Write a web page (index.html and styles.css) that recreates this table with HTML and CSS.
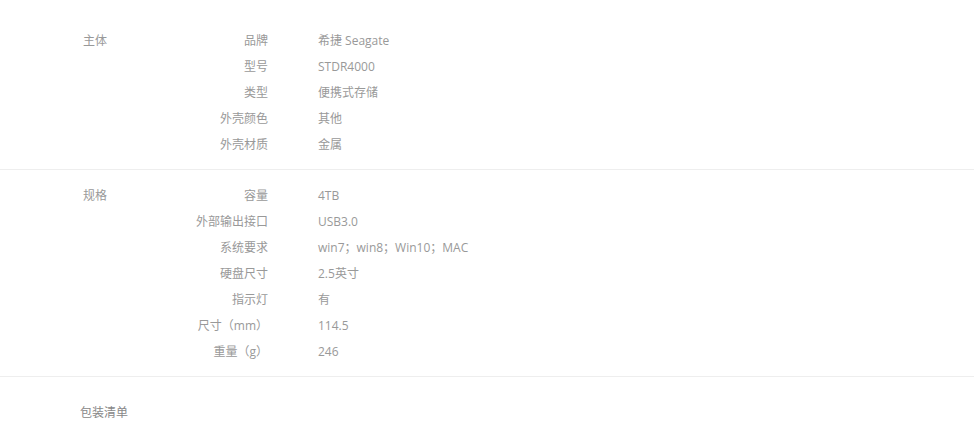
FILE: index.html
```html
<!DOCTYPE html>
<html lang="zh-CN">
<head>
    <meta charset="UTF-8">
    <meta name="viewport" content="width=device-width, initial-scale=1.0">
    <title>规格参数</title>
    <link rel="stylesheet" href="styles.css">
</head>
<body>
    <div class="spec-list">
        <div class="spec-group">
            <div class="group-title">主体</div>
            <dl class="group-items">
                <dt>品牌</dt><dd>希捷 Seagate</dd>
                <dt>型号</dt><dd>STDR4000</dd>
                <dt>类型</dt><dd>便携式存储</dd>
                <dt>外壳颜色</dt><dd>其他</dd>
                <dt>外壳材质</dt><dd>金属</dd>
            </dl>
        </div>
        <div class="spec-group">
            <div class="group-title">规格</div>
            <dl class="group-items">
                <dt>容量</dt><dd>4TB</dd>
                <dt>外部输出接口</dt><dd>USB3.0</dd>
                <dt>系统要求</dt><dd>win7；win8；Win10；MAC</dd>
                <dt>硬盘尺寸</dt><dd>2.5英寸</dd>
                <dt>指示灯</dt><dd>有</dd>
                <dt>尺寸（mm）</dt><dd>114.5</dd>
                <dt>重量（g）</dt><dd>246</dd>
            </dl>
        </div>
        <div class="package">包装清单</div>
    </div>
</body>
</html>
```

FILE: styles.css
```css
body {
    margin: 0;
    padding: 0;
    background-color: #fff;
    font-family: "Open Sans", "Noto Sans CJK SC", sans-serif;
    font-size: 12px;
    color: #999;
}
.spec-list {
    padding-top: 15px;
}
.spec-group {
    display: flex;
    padding: 13px 0 11px 83px;
    border-bottom: 1px solid #eee;
}
.group-title {
    width: 80px;
    line-height: 26px;
}
.group-items {
    display: grid;
    grid-template-columns: 105px auto;
    column-gap: 50px;
    margin: 0;
    line-height: 26px;
}
.group-items dt {
    text-align: right;
}
.group-items dd {
    margin: 0;
}
.package {
    padding: 23px 0 0 80px;
    line-height: 26px;
    color: #888;
}
```
